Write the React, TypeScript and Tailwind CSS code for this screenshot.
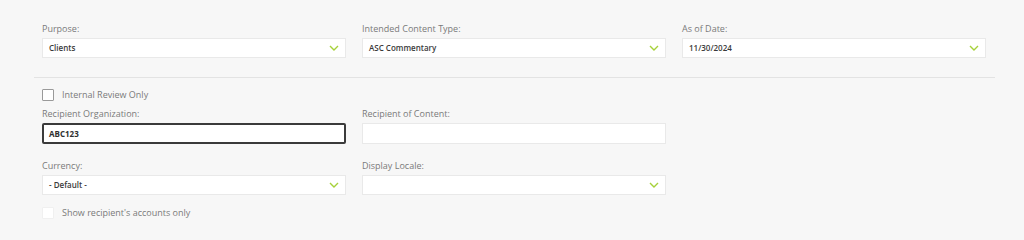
import React from 'react';

const Chevron = () => (
  <svg width="10" height="6" viewBox="0 0 10 6" className="shrink-0">
    <path d="M1 1 L5 5 L9 1" fill="none" stroke="#a6d13a" strokeWidth="1.4" />
  </svg>
);

const Label = ({ children }: { children: React.ReactNode }) => (
  <div className="h-3 text-[9px] leading-3 text-[#7a7a7a] mb-[3px]">{children}</div>
);

const SelectBox = ({ label, value }: { label: string; value?: string }) => (
  <div className="w-[304px]">
    <Label>{label}</Label>
    <div className="h-5 bg-white border border-[#e9e9e9] flex items-center justify-between pl-[6px] pr-[6px]">
      <span className="text-[8px] font-semibold text-[#3a3a3a]">{value}</span>
      <Chevron />
    </div>
  </div>
);

const TextBox = ({ label, value, active }: { label: string; value?: string; active?: boolean }) => (
  <div className="w-[304px]">
    <Label>{label}</Label>
    <div
      className={
        active
          ? 'h-[21px] bg-white border-2 border-[#3b3b3b] rounded-[2px] flex items-center pl-[5px]'
          : 'h-[21px] bg-white border border-[#e9e9e9] flex items-center pl-[6px]'
      }
    >
      <span className="text-[8px] font-bold text-[#2e2e2e]">{value}</span>
    </div>
  </div>
);

const Check = ({ label, faint }: { label: string; faint?: boolean }) => (
  <div className="flex items-center h-3">
    <div
      className={
        faint
          ? 'w-3 h-3 bg-white border border-[#f0f0f0] rounded-[1px]'
          : 'w-3 h-3 bg-white border border-[#9a9a9a] rounded-[1px]'
      }
    />
    <span className="ml-2 text-[9px] leading-3 text-[#7a7a7a]">{label}</span>
  </div>
);

export default function App() {
  return (
    <div
      className="w-[1024px] h-[240px] bg-[#f7f7f7] pt-[23px]"
      style={{ fontFamily: '"Open Sans", "Noto Sans", sans-serif' }}
    >
      <div className="flex gap-4 pl-[42px]">
        <SelectBox label="Purpose:" value="Clients" />
        <SelectBox label="Intended Content Type:" value="ASC Commentary" />
        <SelectBox label="As of Date:" value="11/30/2024" />
      </div>

      <div className="ml-[34px] w-[961px] h-px bg-[#e3e3e3] mt-[19px]" />

      <div className="pl-[42px] pt-[11px]">
        <Check label="Internal Review Only" />
        <div className="flex gap-4 mt-[7px]">
          <TextBox label="Recipient Organization:" value="ABC123" active />
          <TextBox label="Recipient of Content:" />
        </div>
        <div className="flex gap-4 mt-[16px]">
          <SelectBox label="Currency:" value="- Default -" />
          <SelectBox label="Display Locale:" />
        </div>
        <div className="mt-[12px]">
          <Check label="Show recipient's accounts only" faint />
        </div>
      </div>
    </div>
  );
}
